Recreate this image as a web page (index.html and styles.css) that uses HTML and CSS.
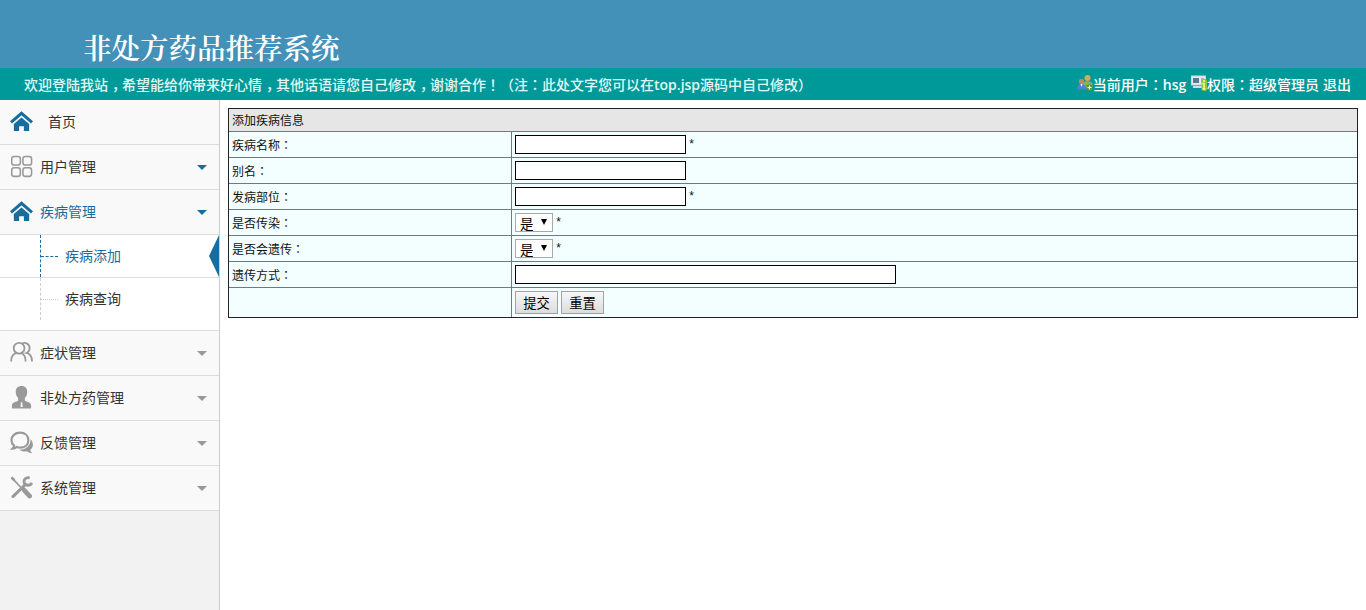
FILE: index.html
```html
<!DOCTYPE html>
<html lang="zh-CN">
<head>
<meta charset="utf-8">
<title>非处方药品推荐系统</title>
<link rel="stylesheet" href="styles.css">
</head>
<body>
<div class="header"><h1>非处方药品推荐系统</h1></div>
<div class="topbar">
<div class="welcome">欢迎登陆我站<span class="dou">，</span>希望能给你带来好心情<span class="dou">，</span>其他话语请您自己修改<span class="dou">，</span>谢谢合作<i lang="zh-TW">！</i><i lang="zh-TW">（</i>注<i lang="zh-TW">：</i>此处文字您可以在<span class="en">top.jsp</span>源码中自己修改<i lang="zh-TW">）</i></div>
<div class="user">
<svg class="ico" width="16" height="16" viewBox="0 0 16 16"><circle cx="10.500" cy="3" r="3" fill="#d9a860"/><path d="M6 11V8.500q1-2.500 4.500-2.500t5 2.500V13H9z" fill="#8fae62"/><circle cx="4.500" cy="6.500" r="2.700" fill="#c98558"/><path d="M0 14.500q0-5.500 4.500-5.500t5 5.500z" fill="#4d83cf"/><path d="M3.500 9h2l-1 3z" fill="#fff"/><circle cx="12.500" cy="12.500" r="3.200" fill="#4f9a35"/><path d="M12.500 10.500v4M10.500 12.500h4" stroke="#fff" stroke-width="1.200"/></svg>当前用户<i lang="zh-TW">：</i><span class="en">hsg</span>
<svg class="ico" width="16" height="16" viewBox="0 0 16 16"><rect x=".5" y="1" width="14" height="9" fill="#e4e9ee" stroke="#cfd8e0"/><rect x="2" y="3" width="6" height="5" fill="#5d7894"/><path d="M10 4h3M10 6h3" stroke="#7589a0"/><path d="M2 12h9" stroke="#d4dde6" stroke-width="2"/><rect x="10.500" y="4" width="5.500" height="12" rx="2" fill="#8cc63c"/><path d="M13 5v2M11.500 8.500H13V14M11.500 14h3" stroke="#fff5a0" stroke-width="1.500" fill="none"/></svg>权限<i lang="zh-TW">：</i>超级管理员 <a href="#">退出</a>
</div>
</div>

<div class="main">
<ul class="menu">
<li class="home"><a href="#"><svg class="mi" viewBox="0 0 24 24"><path d="M1 13L12 3.500 23 13" fill="none" stroke="#196d9e" stroke-width="3.200"/><path d="M4 14.500L12 7.800l8 6.700V22h-5.500v-5h-5v5H4z" fill="#196d9e"/></svg>首页</a></li>
<li><a href="#"><svg class="mi" viewBox="0 0 24 24"><g fill="none" stroke="#999" stroke-width="1.600"><rect x="1.800" y="1.500" width="9" height="9" rx="2.500"/><rect x="13.500" y="1.500" width="9" height="9" rx="2.500"/><rect x="1.800" y="13.300" width="9" height="9" rx="2.500"/><rect x="13.500" y="13.300" width="9" height="9" rx="2.500"/></g></svg>用户管理<b class="arrow blue"></b></a></li>
<li class="open"><a href="#"><svg class="mi" viewBox="0 0 24 24"><path d="M1 13L12 3.500 23 13" fill="none" stroke="#196d9e" stroke-width="3.200"/><path d="M4 14.500L12 7.800l8 6.700V22h-5.500v-5h-5v5H4z" fill="#196d9e"/></svg>疾病管理<b class="arrow blue"></b></a>
<ul class="submenu">
<li class="active"><a href="#">疾病添加</a></li>
<li><a href="#">疾病查询</a></li>
</ul>
</li>
<li><a href="#"><svg class="mi" viewBox="0 0 24 24"><g fill="none" stroke="#999" stroke-width="1.900"><circle cx="9.500" cy="7.500" r="5.600"/><path d="M1.200 21.500c0-5 2-8 5.500-9M12 12.500c3 1.500 4.300 4.500 4.300 9M12.500 2.800c3.500-2 8 .2 8 4.700 0 2.500-1.500 4-3.500 5 4 .8 6 4 6 9"/></g></svg>症状管理<b class="arrow"></b></a></li>
<li><a href="#"><svg class="mi" viewBox="0 0 24 24"><path d="M12 0c4 0 6 2.500 6 6 0 3-1 5-2.500 6.500V15c1.500 1.500 6.500 1.800 6.500 5v3.500H2V20c0-3.200 5-3.500 6.500-5v-2.500C7 11 6 9 6 6c0-3.500 2-6 6-6z" fill="#999"/><path d="M11.500 17h1.200l.5 5h-2.200z" fill="#fff"/></svg>非处方药管理<b class="arrow"></b></a></li>
<li><a href="#"><svg class="mi" viewBox="0 0 24 24"><path d="M10.500 1.800c5.200 0 8.700 3.200 8.700 7.900s-3.700 7.700-8.700 7.700c-1.500 0-2.500-.2-3.500-.7-1 1-2.500 1.800-4.500 1.800 1-1 1.800-2 1.800-3.200C2.500 13.800 1.500 12 1.500 9.700c0-4.700 3.800-7.900 9-7.900z" fill="none" stroke="#999" stroke-width="2.300"/><path d="M21.500 8.500c3.500 4 3 8.500-.3 11 0 1.500 1 2.800 2.300 3.700-2.200 0-4.500-.7-5.700-2-3 .5-6.300 0-7.800-1.700 7 0 11.500-4.500 11.500-11z" fill="#999"/></svg>反馈管理<b class="arrow"></b></a></li>
<li><a href="#"><svg class="mi" viewBox="0 0 24 24"><path d="M2 2l9.500 10" stroke="#999" stroke-width="1.800"/><path d="M.5 2l2-1.500 3 3L4.500 5.500l-2-1z" fill="#999"/><path d="M14.500 14.500l6 6.500" stroke="#999" stroke-width="4.800" stroke-linecap="round"/><path d="M3 21.500L16 9" stroke="#999" stroke-width="3" stroke-linecap="round"/><path d="M20.500 1.800c-4-.8-6.500 2-5.700 5.200 1 3.500 6.500 3.500 8 .2" fill="none" stroke="#999" stroke-width="3"/></svg>系统管理<b class="arrow"></b></a></li>
</ul>

<div class="content">
<form>
<table class="info">
<colgroup><col class="c1"><col></colgroup>
<tr class="caption"><td colspan="2">添加疾病信息</td></tr>
<tr><td class="name">疾病名称<i lang="zh-TW">：</i></td><td><input type="text" class="text"> *</td></tr>
<tr><td class="name">别名<i lang="zh-TW">：</i></td><td><input type="text" class="text"></td></tr>
<tr><td class="name">发病部位<i lang="zh-TW">：</i></td><td><input type="text" class="text"> *</td></tr>
<tr><td class="name">是否传染<i lang="zh-TW">：</i></td><td><span class="sel"><select><option>是</option><option>否</option></select></span> *</td></tr>
<tr><td class="name">是否会遗传<i lang="zh-TW">：</i></td><td><span class="sel"><select><option>是</option><option>否</option></select></span> *</td></tr>
<tr><td class="name">遗传方式<i lang="zh-TW">：</i></td><td><input type="text" class="text long"></td></tr>
<tr class="last"><td class="name"></td><td><input type="button" class="btn" value="提交"><input type="button" class="btn" value="重置"></td></tr>
</table>
</form>
</div>
</div>
</body>
</html>
```
FILE: styles.css
```css
body {
	margin: 0;
	height: 610px;
	overflow: hidden;
	display: flex;
	flex-direction: column;
	background: #fff;
	font: 14px "Liberation Sans", "Noto Sans CJK SC", sans-serif;
	color: #333;
}
i {
	font-style: normal;
	font-family: "Noto Sans CJK TC", sans-serif;
}
a {
	color: inherit;
	text-decoration: none;
}
ul {
	margin: 0;
	padding: 0;
	list-style: none;
}

.header {
	height: 68px;
	background: #4390b9;
}
.header h1 {
	margin: 0;
	padding: 27px 0 0 83px;
	font: 600 28.500px/40px "Noto Serif CJK SC", "Noto Sans CJK SC", serif;
	color: #fff;
}
.topbar {
	height: 32px;
	background: #099;
	display: flex;
	justify-content: space-between;
	padding: 0 15px 0 24px;
	line-height: 32px;
	color: #fff;
	font-weight: 500;
}
.welcome {
	color: #e0f8f8;
}
.dou {
	padding: 0 3px 0 4px;
	font-feature-settings: "halt";
}
.en {
	font-family: "Open Sans", sans-serif;
	font-weight: 600;
}
.ico {
	vertical-align: -1px;
}
.user .en {
	margin-right: 1px;
}

.main {
	flex: 1;
	display: flex;
}
.menu {
	width: 219px;
	border-right: 1px solid #ccc;
	background: #f2f2f2;
}
.menu > li {
	border-bottom: 1px solid #ddd;
	background: #f9f9f9;
}
.menu > li > a {
	display: flex;
	align-items: center;
	height: 44px;
	padding: 0 12px 0 9px;
	line-height: 19px;
}
.mi {
	width: 23px;
	height: 23px;
	margin: 0 7px 2px 1px;
}
.home .mi {
	margin-right: 15px;
}
.open > a {
	color: #196d9e;
}
.arrow {
	margin-left: auto;
	border: 5px solid transparent;
	border-top-color: #999;
	border-bottom: 0;
	margin-top: 1px;
}
.arrow.blue {
	border-top-color: #196d9e;
}
.submenu {
	background: #fff;
	border-top: 1px solid #ddd;
	padding-bottom: 10px;
}
.submenu li {
	position: relative;
	height: 42px;
	line-height: 42px;
	padding-left: 65px;
}
.submenu li:before {
	content: "";
	position: absolute;
	left: 40px;
	top: 0;
	height: 42px;
	border-left: 1px dashed #ccc;
}
.submenu a:before {
	content: "";
	position: absolute;
	left: 41px;
	top: 21px;
	width: 17px;
	border-top: 1px dotted #ccc;
}
.submenu .active {
	color: #196d9e;
	border-bottom: 1px solid #ddd;
}
.submenu .active:before {
	border-left-color: #196d9e;
}
.submenu .active a:before {
	border-top: 1px dashed #196d9e;
}
.submenu .active:after {
	content: "";
	position: absolute;
	right: 0;
	top: 0;
	border: 21px solid transparent;
	border-right: 10px solid #196d9e;
	border-left: 0;
}

.content {
	flex: 1;
	padding: 8px;
}
.info {
	width: 1130px;
	table-layout: fixed;
	border-collapse: separate;
	border-spacing: 0;
	border: 1px solid #222;
	background: #f2feff;
	font-size: 12px;
	color: #111;
}
.c1 {
	width: 283px;
}
.info td {
	box-sizing: border-box;
	height: 26px;
	padding: 0 3px;
	border-bottom: 1px solid #6d7b80;
	line-height: 19px;
}
.info .caption td {
	height: 23px;
	padding-top: 2px;
	background: #e6e6e6;
}
.info .name {
	padding-top: 1px;
	border-right: 1px solid #6d7b80;
}
.info .last td {
	height: 29px;
	border-bottom: 0;
}
.text {
	box-sizing: border-box;
	width: 171px;
	height: 19px;
	border: 1px solid #000;
	background: #fff;
	vertical-align: middle;
}
.long {
	width: 381px;
}
.sel {
	position: relative;
	display: inline-block;
	vertical-align: middle;
}
.sel select {
	appearance: none;
	display: block;
	box-sizing: border-box;
	width: 38px;
	height: 19px;
	margin: 0;
	padding: 0 0 0 4px;
	border: 1px solid #a9a9a9;
	border-radius: 0;
	background: #fff;
	font: 13.500px/19px "Noto Sans CJK SC", sans-serif;
	color: #000;
}
.sel:after {
	content: "";
	position: absolute;
	right: 6px;
	top: 6px;
	border: 3.500px solid transparent;
	border-top: 6px solid #000;
	border-bottom: 0;
}
.btn {
	box-sizing: border-box;
	width: 43px;
	height: 23px;
	margin: 0 3px 0 0;
	padding: 0;
	border: 1px solid #a2a2a2;
	border-radius: 0;
	background: linear-gradient(#f7f7f7, #dcdcdc);
	font: 13.333px "Noto Sans CJK SC", sans-serif;
	color: #000;
	vertical-align: middle;
}
```
